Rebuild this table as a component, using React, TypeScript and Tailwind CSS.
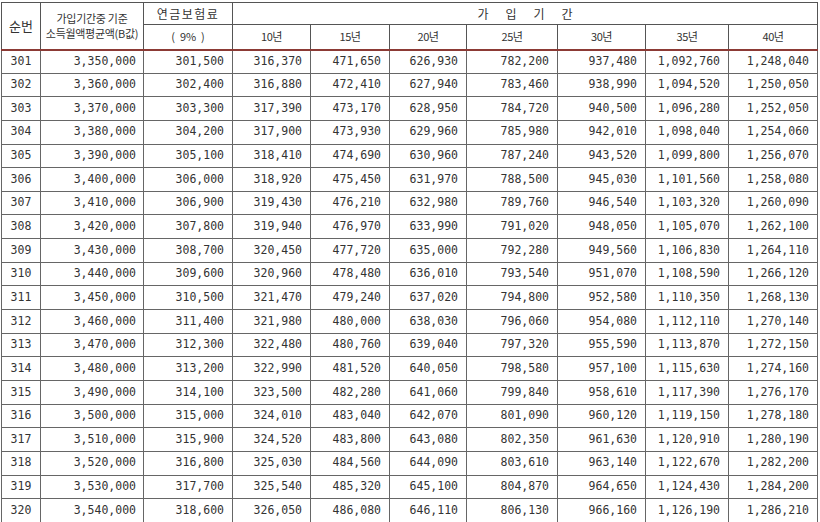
import React from "react";

type Row = {
  no: number;
  income: string;
  premium: string;
  years: string[];
};

const rows: Row[] = [
  { no: 301, income: "3,350,000", premium: "301,500", years: ["316,370", "471,650", "626,930", "782,200", "937,480", "1,092,760", "1,248,040"] },
  { no: 302, income: "3,360,000", premium: "302,400", years: ["316,880", "472,410", "627,940", "783,460", "938,990", "1,094,520", "1,250,050"] },
  { no: 303, income: "3,370,000", premium: "303,300", years: ["317,390", "473,170", "628,950", "784,720", "940,500", "1,096,280", "1,252,050"] },
  { no: 304, income: "3,380,000", premium: "304,200", years: ["317,900", "473,930", "629,960", "785,980", "942,010", "1,098,040", "1,254,060"] },
  { no: 305, income: "3,390,000", premium: "305,100", years: ["318,410", "474,690", "630,960", "787,240", "943,520", "1,099,800", "1,256,070"] },
  { no: 306, income: "3,400,000", premium: "306,000", years: ["318,920", "475,450", "631,970", "788,500", "945,030", "1,101,560", "1,258,080"] },
  { no: 307, income: "3,410,000", premium: "306,900", years: ["319,430", "476,210", "632,980", "789,760", "946,540", "1,103,320", "1,260,090"] },
  { no: 308, income: "3,420,000", premium: "307,800", years: ["319,940", "476,970", "633,990", "791,020", "948,050", "1,105,070", "1,262,100"] },
  { no: 309, income: "3,430,000", premium: "308,700", years: ["320,450", "477,720", "635,000", "792,280", "949,560", "1,106,830", "1,264,110"] },
  { no: 310, income: "3,440,000", premium: "309,600", years: ["320,960", "478,480", "636,010", "793,540", "951,070", "1,108,590", "1,266,120"] },
  { no: 311, income: "3,450,000", premium: "310,500", years: ["321,470", "479,240", "637,020", "794,800", "952,580", "1,110,350", "1,268,130"] },
  { no: 312, income: "3,460,000", premium: "311,400", years: ["321,980", "480,000", "638,030", "796,060", "954,080", "1,112,110", "1,270,140"] },
  { no: 313, income: "3,470,000", premium: "312,300", years: ["322,480", "480,760", "639,040", "797,320", "955,590", "1,113,870", "1,272,150"] },
  { no: 314, income: "3,480,000", premium: "313,200", years: ["322,990", "481,520", "640,050", "798,580", "957,100", "1,115,630", "1,274,160"] },
  { no: 315, income: "3,490,000", premium: "314,100", years: ["323,500", "482,280", "641,060", "799,840", "958,610", "1,117,390", "1,276,170"] },
  { no: 316, income: "3,500,000", premium: "315,000", years: ["324,010", "483,040", "642,070", "801,090", "960,120", "1,119,150", "1,278,180"] },
  { no: 317, income: "3,510,000", premium: "315,900", years: ["324,520", "483,800", "643,080", "802,350", "961,630", "1,120,910", "1,280,190"] },
  { no: 318, income: "3,520,000", premium: "316,800", years: ["325,030", "484,560", "644,090", "803,610", "963,140", "1,122,670", "1,282,200"] },
  { no: 319, income: "3,530,000", premium: "317,700", years: ["325,540", "485,320", "645,100", "804,870", "964,650", "1,124,430", "1,284,200"] },
  { no: 320, income: "3,540,000", premium: "318,600", years: ["326,050", "486,080", "646,110", "806,130", "966,160", "1,126,190", "1,286,210"] },
];

const periods = ["10년", "15년", "20년", "25년", "30년", "35년", "40년"];
const widths = ["w-[39px]", "w-[103px]", "w-[89px]", "w-[78px]", "w-[79px]", "w-[77px]", "w-[91px]", "w-[88px]", "w-[83px]", "w-[89px]"];

const kr = "font-['Noto_Sans_CJK_KR','Noto_Sans',sans-serif]";
const num = "font-['DejaVu_Sans_Mono','Liberation_Mono',monospace] text-[11.5px] text-[#333]";

export default function App() {
  return (
    <div className="h-[522px] w-[820px] overflow-hidden bg-white pl-px pt-[2px]">
      <table className="table-fixed border-collapse w-[816px]">
        <colgroup>
          {widths.map((w, i) => (
            <col key={i} className={w} />
          ))}
        </colgroup>
        <thead className={`${kr} text-[#333] font-normal`}>
          <tr className="h-[22px]">
            <th
              rowSpan={2}
              className="border border-[#555] border-b-2 border-b-[#8c3a35] text-[13px] font-normal leading-none"
            >
              순번
            </th>
            <th
              rowSpan={2}
              className="border border-[#555] border-b-2 border-b-[#8c3a35] text-[11px] font-normal leading-[15px] tracking-[-0.3px]"
            >
              <div>가입기간중 기준</div>
              <div>소득월액평균액(B값)</div>
            </th>
            <th className="border border-[#555] text-[12px] font-normal tracking-[1.5px] leading-none">
              연금보험료
            </th>
            <th colSpan={7} className="border border-[#555] font-normal">
              <div className="flex justify-center gap-[17px] text-[12px] leading-none">
                <span>가</span>
                <span>입</span>
                <span>기</span>
                <span>간</span>
              </div>
            </th>
          </tr>
          <tr className="h-[25px]">
            <th className="border border-[#555] border-b-2 border-b-[#8c3a35] text-[11px] font-normal leading-none whitespace-pre">
              {"(  9%  )"}
            </th>
            {periods.map((p) => (
              <th
                key={p}
                className="border border-[#555] border-b-2 border-b-[#8c3a35] text-[11px] font-normal leading-none tracking-[-0.5px]"
              >
                {p}
              </th>
            ))}
          </tr>
        </thead>
        <tbody className={num}>
          {rows.map((r) => (
            <tr key={r.no} className="h-[23.65px]">
              <td className="border border-[#666] text-center leading-none">{r.no}</td>
              <td className="border border-[#666] text-right pr-[7px] leading-none">{r.income}</td>
              <td className="border border-[#666] text-right pr-[8px] leading-none">{r.premium}</td>
              {r.years.map((v, i) => (
                <td key={i} className="border border-[#666] text-right pr-[8px] leading-none">
                  {v}
                </td>
              ))}
            </tr>
          ))}
          <tr className="h-[23.65px]">
            {widths.map((_, i) => (
              <td key={i} className="border border-[#666]" />
            ))}
          </tr>
        </tbody>
      </table>
    </div>
  );
}
